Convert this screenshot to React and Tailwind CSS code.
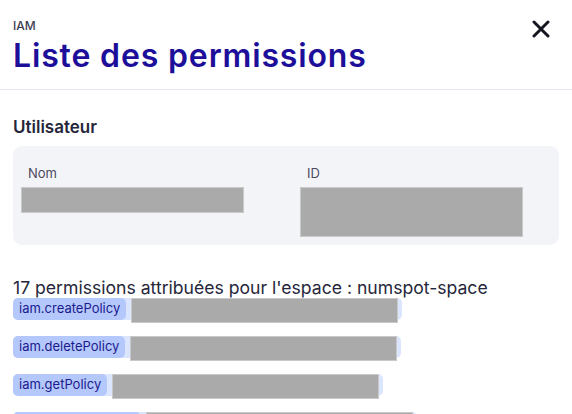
import React from 'react';

const permissions = [
  'iam.createPolicy',
  'iam.deletePolicy',
  'iam.getPolicy',
  'iam.listPolicyUsers',
];

/**
 * Redacted block (grey box hiding a value)
 */
const Redacted = ({ className }) => (
  <div className={`bg-[#aaaaaa] border border-[#c9c9c9] ${className}`} />
);

export default function App() {
  return (
    <div className="h-[414px] w-[572px] overflow-hidden bg-white font-['Inter',sans-serif] text-[#26263a]">
      {/* Header */}
      <div className="flex items-start justify-between border-b border-[#e6e6ee] pl-[13px] pr-[22px] pt-[18px] pb-[13px]">
        <div>
          <p className="text-[12px] font-medium leading-[16px] text-[#3b3b50]">IAM</p>
          <h1 className="mt-[2px] text-[32px] font-semibold leading-[40px] tracking-[0.85px] text-[#1d0f99]">
            Liste des permissions
          </h1>
        </div>
        <button className="mt-[2px] p-0" aria-label="Fermer">
          <svg width="18" height="18" viewBox="0 0 18 18" fill="none" stroke="#151522" strokeWidth="3" strokeLinecap="round">
            <path d="M2 2l14 14M16 2L2 16" />
          </svg>
        </button>
      </div>

      {/* User section */}
      <div className="px-[13px]">
        <h2 className="mt-[25px] text-[17px] font-semibold leading-[24px] text-[#26263a]">Utilisateur</h2>
        <div className="mt-[7px] grid h-[99px] grid-cols-[279px_1fr] rounded-[9px] bg-[#f3f4f8] pl-[15px] pt-[18px]">
          <div>
            <p className="text-[13px] leading-[18px] text-[#4a4a5e]">Nom</p>
            <Redacted className="-ml-[7px] mt-[5px] h-[26px] w-[223px]" />
          </div>
          <div>
            <p className="text-[13px] leading-[18px] text-[#4a4a5e]">ID</p>
            <Redacted className="-ml-[7px] mt-[5px] h-[50px] w-[223px]" />
          </div>
        </div>

        {/* Permissions */}
        <p className="mt-[33px] whitespace-nowrap text-[17.6px] leading-[20px] text-[#26263a]">
          17 permissions attribuées pour l'espace : numspot-space
        </p>
        <div className="flex flex-col gap-[16px]">
          {permissions.map((name) => (
            <div key={name} className="flex h-[22px] w-fit items-start rounded-[5px] bg-[#dbe6fe]">
              <span className="flex h-[22px] items-center rounded-[5px] bg-[#b4c8fb] px-[6px] text-[13px] text-[#1c1a8e]">
                {name}
              </span>
              <Redacted className="ml-[5px] mr-[4px] h-[25px] w-[267px] shrink-0" />
            </div>
          ))}
        </div>
      </div>
    </div>
  );
}
